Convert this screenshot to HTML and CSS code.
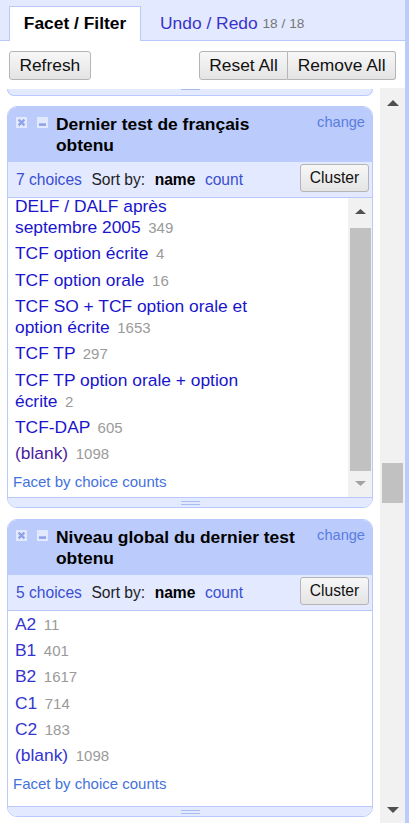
FILE: index.html
```html
<!DOCTYPE html>
<html lang="fr">
<head>
<meta charset="utf-8">
<title>Facet / Filter</title>
<link rel="stylesheet" href="styles.css">
</head>
<body>
<div class="app">
  <div class="panel">
    <div class="tabs">
      <div class="tab tab-active">Facet / Filter</div>
      <div class="tab tab-plain"><a class="tab-link">Undo / Redo</a>&nbsp;<span class="tab-count">18 / 18</span></div>
    </div>
    <div class="toolbar">
      <button class="btn">Refresh</button>
      <div class="btn-group">
        <button class="btn btn-left">Reset All</button><button class="btn btn-right">Remove All</button>
      </div>
    </div>
    <div class="scroll-area">
      <div class="facets">
        <div class="facet-tail"><div class="tail-grip"></div></div>

        <div class="facet">
          <div class="facet-title">
            <svg class="icon" viewBox="0 0 11 11" width="11" height="11"><rect width="11" height="11" fill="#e2e8fd"/><path d="M2.6 2.6L8.4 8.4M8.4 2.6L2.6 8.4" stroke="#8fa3ea" stroke-width="2.2"/></svg>
            <svg class="icon icon-second" viewBox="0 0 11 11" width="11" height="11"><rect width="11" height="11" fill="#e2e8fd"/><rect x="2" y="6.3" width="7" height="2.6" fill="#8fa3ea"/></svg>
            <span class="title-text">Dernier test de français obtenu</span>
            <a class="change">change</a>
          </div>
          <div class="facet-controls">
            <a class="ctl ctl-link">7 choices</a>
            <span class="ctl">Sort by:</span>
            <span class="ctl ctl-bold">name</span>
            <a class="ctl ctl-link">count</a>
            <button class="btn cluster">Cluster</button>
          </div>
          <div class="facet-body body-fixed">
            <div class="choices-view">
              <div class="choices choices-scrolled">
                <div class="choice"><a class="label">DELF / DALF après septembre 2005</a> <span class="count">349</span></div>
                <div class="choice"><a class="label">TCF option écrite</a> <span class="count">4</span></div>
                <div class="choice"><a class="label">TCF option orale</a> <span class="count">16</span></div>
                <div class="choice"><a class="label">TCF SO + TCF option orale et option écrite</a> <span class="count">1653</span></div>
                <div class="choice"><a class="label">TCF TP</a> <span class="count">297</span></div>
                <div class="choice"><a class="label">TCF TP option orale + option écrite</a> <span class="count">2</span></div>
                <div class="choice"><a class="label">TCF-DAP</a> <span class="count">605</span></div>
                <div class="choice"><a class="label label-visited">(blank)</a> <span class="count">1098</span></div>
                <a class="by-counts">Facet by choice counts</a>
              </div>
            </div>
            <div class="vscroll vscroll-inner">
              <div class="vs-btn vs-up"><svg width="11" height="5" viewBox="0 0 11 5"><polygon points="5.5,0 11,5 0,5" fill="#505050"/></svg></div>
              <div class="vs-track"><div class="vs-thumb thumb-inner"></div></div>
              <div class="vs-btn vs-down"><svg width="11" height="5" viewBox="0 0 11 5"><polygon points="0,0 11,0 5.5,5" fill="#a3a3a3"/></svg></div>
            </div>
          </div>
          <div class="facet-grip"><div class="grip"></div></div>
        </div>

        <div class="facet">
          <div class="facet-title">
            <svg class="icon" viewBox="0 0 11 11" width="11" height="11"><rect width="11" height="11" fill="#e2e8fd"/><path d="M2.6 2.6L8.4 8.4M8.4 2.6L2.6 8.4" stroke="#8fa3ea" stroke-width="2.2"/></svg>
            <svg class="icon icon-second" viewBox="0 0 11 11" width="11" height="11"><rect width="11" height="11" fill="#e2e8fd"/><rect x="2" y="6.3" width="7" height="2.6" fill="#8fa3ea"/></svg>
            <span class="title-text">Niveau global du dernier test obtenu</span>
            <a class="change">change</a>
          </div>
          <div class="facet-controls">
            <a class="ctl ctl-link">5 choices</a>
            <span class="ctl">Sort by:</span>
            <span class="ctl ctl-bold">name</span>
            <a class="ctl ctl-link">count</a>
            <button class="btn cluster">Cluster</button>
          </div>
          <div class="facet-body body-auto">
            <div class="choices choices-light">
              <div class="choice"><a class="label">A2</a> <span class="count">11</span></div>
              <div class="choice"><a class="label">B1</a> <span class="count">401</span></div>
              <div class="choice"><a class="label">B2</a> <span class="count">1617</span></div>
              <div class="choice"><a class="label">C1</a> <span class="count">714</span></div>
              <div class="choice"><a class="label">C2</a> <span class="count">183</span></div>
              <div class="choice"><a class="label">(blank)</a> <span class="count">1098</span></div>
              <a class="by-counts">Facet by choice counts</a>
            </div>
          </div>
          <div class="facet-grip"><div class="grip"></div></div>
        </div>
      </div>
      <div class="vscroll vscroll-outer">
        <div class="vs-btn vs-up"><svg width="12" height="6" viewBox="0 0 12 6"><polygon points="6,0 12,6 0,6" fill="#505050"/></svg></div>
        <div class="vs-track"><div class="vs-thumb thumb-outer"></div></div>
        <div class="vs-btn vs-down"><svg width="12" height="6" viewBox="0 0 12 6"><polygon points="0,0 12,0 6,6" fill="#505050"/></svg></div>
      </div>
    </div>
  </div>
  <div class="edge"></div>
</div>
</body>
</html>
```

FILE: styles.css
```css
html, body {
  margin: 0;
  padding: 0;
  background: #ffffff;
}

body {
  font-family: "Liberation Sans", Arial, sans-serif;
  color: #000;
}

a {
  text-decoration: none;
  cursor: pointer;
}

.app {
  display: flex;
  width: 409px;
  height: 823px;
  overflow: hidden;
}

.panel {
  width: 405px;
  display: flex;
  flex-direction: column;
  background: #fff;
}

.edge {
  width: 4px;
  background: #bbcbfb;
}

/* Tabs */
.tabs {
  height: 40px;
  flex: none;
  display: flex;
  align-items: flex-end;
  padding-left: 9px;
  background: #e3e9ff;
  border-bottom: 1px solid #b9c9fb;
}

.tab {
  display: flex;
  align-items: center;
  font-size: 17.4px;
  margin-bottom: -1px;
  padding-bottom: 1px;
  height: 33px;
  white-space: nowrap;
}

.tab-active {
  width: 130px;
  justify-content: center;
  background: #fff;
  border: 1px solid #b9c9fb;
  border-bottom: none;
  font-weight: bold;
  color: #000;
}

.tab-plain {
  padding-left: 19px;
}

.tab-link {
  color: #3a33c8;
}

.tab-count {
  font-size: 13.7px;
  color: #777;
}

/* Toolbar */
.toolbar {
  flex: none;
  display: flex;
  justify-content: space-between;
  padding: 10px 9px 8px 9px;
}

.btn-group {
  display: flex;
}

.btn {
  font-family: "Liberation Sans", Arial, sans-serif;
  font-size: 17.4px;
  height: 29px;
  padding: 0 9.4px;
  margin: 0;
  border: 1px solid #b5b5b5;
  border-radius: 3px;
  background: linear-gradient(to bottom, #f7f7f7, #e4e4e4);
  color: #111;
  line-height: normal;
}

.btn-left {
  border-radius: 3px 0 0 3px;
}

.btn-right {
  border-radius: 0 3px 3px 0;
  border-left: none;
}

/* Scroll area */
.scroll-area {
  flex: 1;
  min-height: 0;
  display: flex;
}

.facets {
  width: 380px;
  flex: none;
  box-sizing: border-box;
  padding-left: 7px;
  overflow: hidden;
}

.facet-tail {
  width: 366px;
  height: 7px;
  box-sizing: border-box;
  border: 1px solid #b9c9fb;
  border-top: none;
  border-radius: 0 0 9px 9px;
  background: #e3e9ff;
  margin-bottom: 10px;
}

.tail-grip {
  width: 19px;
  height: 1px;
  margin: 1px auto 0;
  background: #a9bbf3;
}

.facet {
  width: 366px;
  box-sizing: border-box;
  border: 1px solid #b9c9fb;
  border-radius: 10px;
  overflow: hidden;
  margin-bottom: 11px;
  background: #fff;
}

.facet-title {
  display: flex;
  align-items: flex-start;
  padding: 7px 7px 7px 8px;
  background: #bbcbfb;
}

.icon {
  display: block;
  flex: none;
  width: 11px;
  height: 11px;
  margin-top: 3px;
}

.icon-second {
  margin-left: 10px;
}

.title-text {
  flex: 1;
  margin-left: 8px;
  font-size: 17.4px;
  line-height: 20.5px;
  font-weight: bold;
  color: #000;
}

.change {
  flex: none;
  margin-left: 14px;
  font-size: 14.6px;
  line-height: 16px;
  color: #5a7de0;
}

.facet-controls {
  height: 36px;
  box-sizing: border-box;
  display: flex;
  align-items: flex-start;
  padding: 2px 3px 0 8px;
  background: #e3e9ff;
  border-bottom: 1px solid #b9c9fb;
  font-size: 15.6px;
  white-space: nowrap;
}

.ctl {
  margin-top: 7px;
  margin-right: 9.5px;
  line-height: 18px;
  color: #222;
}

.ctl-link {
  color: #3a4fd0;
}

.ctl-bold {
  font-weight: bold;
  color: #000;
}

.cluster {
  margin-left: auto;
  height: 28px;
  font-size: 15.6px;
  padding: 0 8.8px;
}

/* Facet body */
.facet-body {
  display: flex;
}

.body-fixed {
  height: 299px;
}

.body-auto {
  padding-bottom: 13px;
}

.choices-view {
  flex: 1;
  overflow: hidden;
}

.choices {
  display: flex;
  flex-direction: column;
  align-items: flex-start;
}

.choices-scrolled {
  margin-top: -4.5px;
}

.choice {
  width: 236px;
  padding: 2.7px 0 2.6px 7px;
  font-size: 17.4px;
  line-height: 21px;
}

.label {
  color: #1a14cc;
}

.label-visited {
  color: #4c1ca2;
}

.choices-light .label {
  color: #3434cf;
}

.count {
  font-size: 15px;
  line-height: 14px;
  color: #9a9a9a;
  margin-left: 2.7px;
}

.by-counts {
  display: block;
  margin-top: 6px;
  padding-left: 5px;
  font-size: 15px;
  line-height: 18px;
  color: #4472dc;
}

.facet-grip {
  height: 9px;
  border-top: 1px solid #b9c9fb;
  background: #e3e9ff;
}

.grip {
  width: 19px;
  height: 2px;
  margin: 3px auto 0;
  border-top: 1px solid #a9bbf3;
  border-bottom: 1px solid #a9bbf3;
}

/* Scrollbars */
.vscroll {
  flex: none;
  display: flex;
  flex-direction: column;
  background: #f1f1f1;
}

.vscroll-inner {
  width: 24px;
}

.vscroll-outer {
  width: 25px;
}

.vs-btn {
  flex: none;
  height: 25px;
  display: flex;
  justify-content: center;
}

.vs-btn svg {
  display: block;
}

.vs-up {
  align-items: flex-start;
}

.vs-down {
  align-items: flex-end;
}

.vscroll-inner .vs-up svg {
  margin-top: 11px;
}

.vscroll-inner .vs-down svg {
  margin-bottom: 11px;
}

.vscroll-outer .vs-up svg {
  margin-top: 12px;
}

.vscroll-outer .vs-down svg {
  margin-bottom: 10px;
}

.vs-track {
  flex: 1;
  min-height: 0;
}

.vs-thumb {
  margin-left: 2px;
  width: 21px;
  background: #c1c1c1;
}

.thumb-inner {
  margin-top: 5px;
  height: 243px;
}

.thumb-outer {
  margin-top: 350px;
  height: 40px;
}
```
